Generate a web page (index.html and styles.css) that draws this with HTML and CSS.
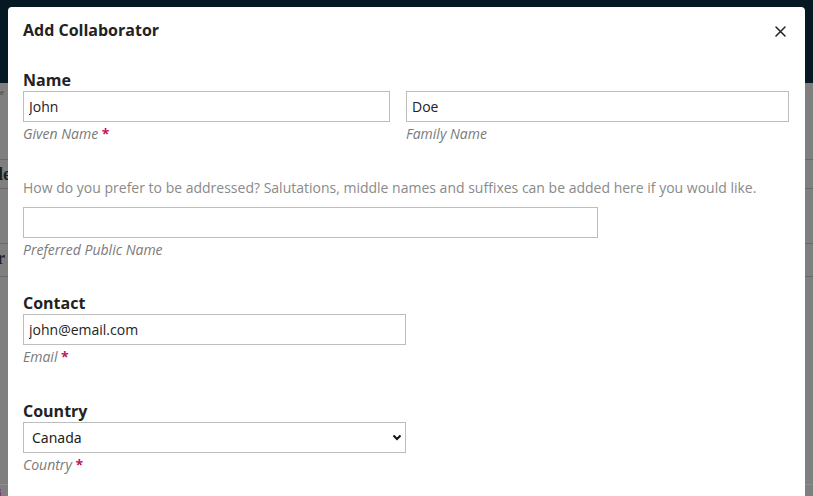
FILE: index.html
```html
<!DOCTYPE html>
<html lang="en">
<head>
<meta charset="utf-8">
<title>Add Collaborator</title>
<link rel="stylesheet" href="styles.css">
</head>
<body>
<div class="page">
  <header class="page-header"></header>
  <div class="page-body">
    <div class="bg-row bg-row-a"><span class="bg-text small">Se</span></div>
    <div class="bg-row bg-row-b"><span class="bg-text big">Ide</span></div>
    <div class="bg-row bg-row-c"></div>
    <div class="bg-row bg-row-d"><span class="bg-text big">Pr</span></div>
    <div class="bg-row bg-row-e"></div>
    <div class="bg-row bg-row-f"><span class="bg-text red">Affi</span></div>
  </div>
</div>

<div class="overlay">
  <div class="modal" role="dialog" aria-labelledby="modal-title">
    <div class="modal-header">
      <h2 id="modal-title" class="modal-title">Add Collaborator</h2>
      <button class="modal-close" type="button" aria-label="Close">
        <svg width="11" height="11" viewBox="0 0 11 11"><path d="M1 1L10 10M10 1L1 10" stroke="#222" stroke-width="1.5" stroke-linecap="round"/></svg>
      </button>
    </div>
    <form class="modal-body">
      <fieldset class="section section-name">
        <legend class="section-label">Name</legend>
        <div class="row">
          <div class="col half pad-right">
            <input class="text-input" type="text" value="John">
            <div class="desc">Given Name <span class="req">*</span></div>
          </div>
          <div class="col half">
            <input class="text-input" type="text" value="Doe">
            <div class="desc">Family Name</div>
          </div>
        </div>
        <p class="help">How do you prefer to be addressed? Salutations, middle names and suffixes can be added here if you would like.</p>
        <div class="col three-quarter">
          <input class="text-input" type="text" value="">
          <div class="desc">Preferred Public Name</div>
        </div>
      </fieldset>

      <fieldset class="section section-contact">
        <legend class="section-label">Contact</legend>
        <div class="col half">
          <input class="text-input" type="text" value="john@email.com">
          <div class="desc">Email <span class="req">*</span></div>
        </div>
      </fieldset>

      <fieldset class="section section-country">
        <legend class="section-label">Country</legend>
        <div class="col half">
          <div class="select-wrap">
            <select class="select-input">
              <option>Canada</option>
            </select>
            <svg class="chevron" width="10" height="7" viewBox="0 0 10 7"><path d="M1.5 1.5L5 5L8.5 1.5" fill="none" stroke="#111" stroke-width="2"/></svg>
          </div>
          <div class="desc">Country <span class="req">*</span></div>
        </div>
      </fieldset>
    </form>
  </div>
</div>
</body>
</html>
```

FILE: styles.css
```css
* { box-sizing: border-box; }

html, body {
  margin: 0;
  padding: 0;
  height: 100%;
  overflow: hidden;
}

body {
  font-family: "Open Sans", "Noto Sans", sans-serif;
  background: #7f7f7f;
}

.page-header {
  height: 83px;
  background: #061821;
}

.page-body {
  display: flex;
  flex-direction: column;
}

.bg-row {
  border-bottom: 1px solid #6a6a6a;
  position: relative;
}
.bg-row-a { height: 77px; }
.bg-row-b { height: 29px; }
.bg-row-c { height: 55px; }
.bg-row-d { height: 33px; }
.bg-row-e { height: 208px; border-bottom-color: #8f8f8f; }
.bg-row-f { height: 20px; border-bottom: none; }

.bg-text {
  display: block;
  font-family: "Liberation Serif", serif;
  color: #1e1e1e;
  margin-left: -14px;
}
.bg-text.small { font-size: 9px; color: #444; margin-top: 4px; margin-left: -5px; }
.bg-text.big { font-size: 18px; font-weight: bold; margin-top: 4px; }
.bg-text.red { font-size: 14px; font-weight: bold; color: #7a0a2a; margin-left: -22px; margin-top: 2px; }

.overlay {
  position: absolute;
  inset: 0;
  padding: 7px 8px 0 8px;
}

.modal {
  background: #fff;
  border-radius: 4px 4px 0 0;
  height: 100%;
  overflow: hidden;
}

.modal-header {
  display: flex;
  align-items: center;
  justify-content: space-between;
  padding: 6px 15px 0 15px;
  height: 42px;
}

.modal-title {
  margin: 0;
  font-size: 16px;
  font-weight: 700;
  color: #222;
  line-height: 22px;
  margin-top: -3px;
}

.modal-close {
  border: none;
  background: none;
  padding: 4px;
  margin-right: 0;
  display: flex;
  cursor: pointer;
}

.modal-body {
  padding: 0 16px 0 15px;
}

.section {
  border: none;
  margin: 0;
  padding: 0;
  min-width: 0;
}

.section-label {
  padding: 0;
  font-size: 16px;
  font-weight: 700;
  color: #222;
  line-height: 22px;
}

.section-name { margin-top: 20px; }
.section-contact { margin-top: 33px; }
.section-country { margin-top: 34px; }

.row {
  display: flex;
}

.col { display: block; }
.half { width: 50%; }
.pad-right { padding-right: 16px; }
.three-quarter { width: 75%; }

.text-input,
.select-input {
  display: block;
  width: 100%;
  height: 31px;
  border: 1px solid #bdbdbd;
  border-radius: 0;
  background: #fff;
  font-family: "Open Sans", "Noto Sans", sans-serif;
  font-size: 14px;
  color: #222;
  padding: 0 5px;
  margin: 0;
  outline: none;
}

.select-wrap {
  position: relative;
}

.select-input {
  appearance: none;
  -webkit-appearance: none;
  padding-left: 8px;
  font-family: "Noto Sans", "Open Sans", sans-serif;
}

.chevron {
  position: absolute;
  right: 4px;
  top: 12px;
  pointer-events: none;
}

.desc {
  font-size: 14px;
  font-style: italic;
  color: #7a7a7a;
  line-height: 19px;
  margin-top: 2px;
}

.req {
  color: #c2185b;
  font-style: normal;
  font-weight: bold;
}

.help {
  margin: 35px 0 9px 0;
  font-size: 14px;
  color: #8a8a8a;
  line-height: 20px;
}
```
